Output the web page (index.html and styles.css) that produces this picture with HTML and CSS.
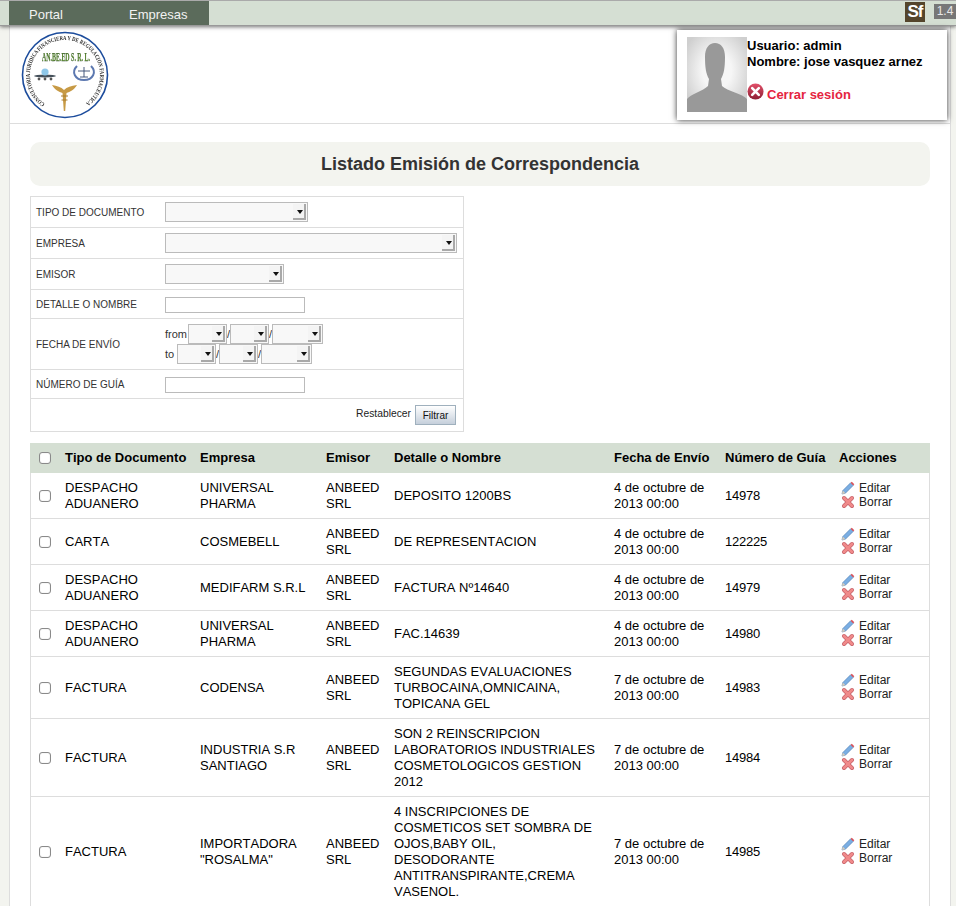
FILE: index.html
```html
<!DOCTYPE html>
<html lang="es">
<head>
    <meta charset="UTF-8">
    <meta name="viewport" content="width=device-width, initial-scale=1.0">
    <title>Listado Emisión de Correspondencia</title>
    <link rel="stylesheet" href="styles.css">
</head>
<body>

    <!-- Top menu -->
    <div class="topbar">
        <nav class="menu">
            <a class="menu-item">Portal</a>
            <a class="menu-item">Empresas</a>
        </nav>
        <div class="debug">
            <span class="sf-badge">Sf</span>
            <span class="sf-version">1.4</span>
        </div>
    </div>

    <div class="page">

        <!-- Logo and user box -->
        <header class="page-header">
            <svg class="logo" width="90" height="90" viewBox="0 0 90 90">
                <defs>
                    <path id="ring-text" d="M 25 73.7 A 35 35 0 1 1 65 73.7"></path>
                </defs>
                <circle cx="45" cy="45" r="42.5" fill="#fff" stroke="#1c4c9c" stroke-width="1.6"></circle>
                <text class="logo-ring"><textPath href="#ring-text" textLength="176" lengthAdjust="spacingAndGlyphs">CONSULTORIA JURIDICA FINANCIERA Y DE REGULACION FARMACEUTICA</textPath></text>
                <text class="logo-name" x="22" y="31" textLength="48" lengthAdjust="spacingAndGlyphs">AN.BE.ED S. R. L.</text>
                <!-- left emblem -->
                <ellipse cx="25" cy="46" rx="11" ry="1.4" fill="#45505a"></ellipse>
                <circle cx="25" cy="42" r="3.6" fill="#8fc7e8"></circle>
                <circle cx="19" cy="49" r="1.4" fill="#555"></circle>
                <circle cx="25" cy="49" r="1.4" fill="#555"></circle>
                <circle cx="31" cy="49" r="1.4" fill="#555"></circle>
                <!-- right emblem -->
                <path d="M 57 36 C 51 42 55 50 64 50 C 73 50 77 42 71 36" fill="none" stroke="#5c78b0" stroke-width="2"></path>
                <path d="M 58 41 H 70 M 64 37 V 47 M 60 47 H 68" fill="none" stroke="#33476f" stroke-width="0.9"></path>
                <!-- caduceus -->
                <path d="M 32 55 C 37 56 41 57 44 60 C 47 57 51 56 57 55 C 54 60 50 62 46.5 63 L 45.2 81 H 43.8 L 42.5 63 C 39 62 35 60 32 55 Z" fill="#c79a45"></path>
                <path d="M 41 66 H 48 M 41.5 70 H 47.5" stroke="#a87d30" stroke-width="1"></path>
            </svg>

            <div class="user-box">
                <svg class="avatar" width="60" height="75" viewBox="0 0 60 75">
                    <defs>
                        <radialGradient id="avatar-bg" cx="50%" cy="45%" r="60%">
                            <stop offset="0.4" stop-color="#f6f6f6"></stop>
                            <stop offset="1" stop-color="#cfcfcf"></stop>
                        </radialGradient>
                    </defs>
                    <rect width="60" height="75" fill="url(#avatar-bg)"></rect>
                    <path d="M0 75 V62 C4 57 16 54 21 49 L22 42 C19 37 18 30 18 20 C18 11 22 6 28 6 C34 6 38 11 38 20 C38 30 37 37 34 42 L35 49 C40 54 56 57 60 62 V75 Z" fill="#999"></path>
                </svg>
                <div class="user-info">
                    <div>Usuario: admin</div>
                    <div>Nombre: jose vasquez arnez</div>
                    <a class="logout">
                        <svg class="logout-icon" width="17" height="17" viewBox="0 0 17 17">
                            <defs>
                                <linearGradient id="logout-bg" x1="0" y1="0" x2="0" y2="1">
                                    <stop offset="0" stop-color="#e2506a"></stop>
                                    <stop offset="1" stop-color="#8e1f33"></stop>
                                </linearGradient>
                            </defs>
                            <circle cx="8.5" cy="8.5" r="8" fill="url(#logout-bg)"></circle>
                            <path d="M5.2 5.2 L11.8 11.8 M11.8 5.2 L5.2 11.8" stroke="#fff" stroke-width="2.6" stroke-linecap="round"></path>
                        </svg>
                        Cerrar sesión
                    </a>
                </div>
            </div>
        </header>

        <main class="content">
            <h1 class="title">Listado Emisión de Correspondencia</h1>

            <!-- Filters -->
            <table class="filters">
                <colgroup>
                    <col class="filter-label-col">
                    <col>
                </colgroup>
                <tr>
                    <td class="filter-label">Tipo de documento</td>
                    <td class="filter-field"><span class="sel sel-doc"><select></select></span></td>
                </tr>
                <tr>
                    <td class="filter-label">Empresa</td>
                    <td class="filter-field"><span class="sel sel-emp"><select></select></span></td>
                </tr>
                <tr>
                    <td class="filter-label">Emisor</td>
                    <td class="filter-field"><span class="sel sel-emi"><select></select></span></td>
                </tr>
                <tr>
                    <td class="filter-label">Detalle o nombre</td>
                    <td class="filter-field filter-text"><input type="text"></td>
                </tr>
                <tr>
                    <td class="filter-label">Fecha de envío</td>
                    <td class="filter-field">
                        <div class="date-row">
                            <span class="date-word date-from">from</span>
                            <span class="sel sel-d"><select></select></span>/<span class="sel sel-d"><select></select></span>/<span class="sel sel-y"><select></select></span>
                        </div>
                        <div class="date-row">
                            <span class="date-word date-to">to</span>
                            <span class="sel sel-d"><select></select></span>/<span class="sel sel-d"><select></select></span>/<span class="sel sel-y"><select></select></span>
                        </div>
                    </td>
                </tr>
                <tr>
                    <td class="filter-label">Número de guía</td>
                    <td class="filter-field filter-text"><input type="text"></td>
                </tr>
                <tr>
                    <td class="filter-actions" colspan="2">
                        <div class="filter-buttons">
                            <a class="reset">Restablecer</a>
                            <button class="filter-btn">Filtrar</button>
                        </div>
                    </td>
                </tr>
            </table>

            <!-- List -->
            <table class="list">
                <colgroup>
                    <col class="c-check"><col class="c-tipo"><col class="c-empresa"><col class="c-emisor">
                    <col class="c-detalle"><col class="c-fecha"><col class="c-guia"><col class="c-acciones">
                </colgroup>
                <thead>
                    <tr>
                        <th><input type="checkbox"></th>
                        <th>Tipo de Documento</th>
                        <th>Empresa</th>
                        <th>Emisor</th>
                        <th>Detalle o Nombre</th>
                        <th>Fecha de Envío</th>
                        <th>Número de Guía</th>
                        <th>Acciones</th>
                    </tr>
                </thead>
                <tbody>
                    <tr>
                        <td><input type="checkbox"></td>
                        <td>DESPACHO ADUANERO</td>
                        <td>UNIVERSAL PHARMA</td>
                        <td>ANBEED SRL</td>
                        <td>DEPOSITO 1200BS</td>
                        <td>4 de octubre de 2013 00:00</td>
                        <td class="guia">14978</td>
                        <td>
                            <a class="action"><svg class="action-icon" viewBox="0 0 14 14"><use href="#icon-edit"></use></svg>Editar</a>
                            <a class="action"><svg class="action-icon" viewBox="0 0 14 14"><use href="#icon-delete"></use></svg>Borrar</a>
                        </td>
                    </tr>
                    <tr>
                        <td><input type="checkbox"></td>
                        <td>CARTA</td>
                        <td>COSMEBELL</td>
                        <td>ANBEED SRL</td>
                        <td>DE REPRESENTACION</td>
                        <td>4 de octubre de 2013 00:00</td>
                        <td class="guia">122225</td>
                        <td>
                            <a class="action"><svg class="action-icon" viewBox="0 0 14 14"><use href="#icon-edit"></use></svg>Editar</a>
                            <a class="action"><svg class="action-icon" viewBox="0 0 14 14"><use href="#icon-delete"></use></svg>Borrar</a>
                        </td>
                    </tr>
                    <tr>
                        <td><input type="checkbox"></td>
                        <td>DESPACHO ADUANERO</td>
                        <td>MEDIFARM S.R.L</td>
                        <td>ANBEED SRL</td>
                        <td>FACTURA Nº14640</td>
                        <td>4 de octubre de 2013 00:00</td>
                        <td class="guia">14979</td>
                        <td>
                            <a class="action"><svg class="action-icon" viewBox="0 0 14 14"><use href="#icon-edit"></use></svg>Editar</a>
                            <a class="action"><svg class="action-icon" viewBox="0 0 14 14"><use href="#icon-delete"></use></svg>Borrar</a>
                        </td>
                    </tr>
                    <tr>
                        <td><input type="checkbox"></td>
                        <td>DESPACHO ADUANERO</td>
                        <td>UNIVERSAL PHARMA</td>
                        <td>ANBEED SRL</td>
                        <td>FAC.14639</td>
                        <td>4 de octubre de 2013 00:00</td>
                        <td class="guia">14980</td>
                        <td>
                            <a class="action"><svg class="action-icon" viewBox="0 0 14 14"><use href="#icon-edit"></use></svg>Editar</a>
                            <a class="action"><svg class="action-icon" viewBox="0 0 14 14"><use href="#icon-delete"></use></svg>Borrar</a>
                        </td>
                    </tr>
                    <tr>
                        <td><input type="checkbox"></td>
                        <td>FACTURA</td>
                        <td>CODENSA</td>
                        <td>ANBEED SRL</td>
                        <td>SEGUNDAS EVALUACIONES TURBOCAINA,OMNICAINA, TOPICANA GEL</td>
                        <td>7 de octubre de 2013 00:00</td>
                        <td class="guia">14983</td>
                        <td>
                            <a class="action"><svg class="action-icon" viewBox="0 0 14 14"><use href="#icon-edit"></use></svg>Editar</a>
                            <a class="action"><svg class="action-icon" viewBox="0 0 14 14"><use href="#icon-delete"></use></svg>Borrar</a>
                        </td>
                    </tr>
                    <tr>
                        <td><input type="checkbox"></td>
                        <td>FACTURA</td>
                        <td>INDUSTRIA S.R SANTIAGO</td>
                        <td>ANBEED SRL</td>
                        <td>SON 2 REINSCRIPCION LABORATORIOS INDUSTRIALES COSMETOLOGICOS GESTION 2012</td>
                        <td>7 de octubre de 2013 00:00</td>
                        <td class="guia">14984</td>
                        <td>
                            <a class="action"><svg class="action-icon" viewBox="0 0 14 14"><use href="#icon-edit"></use></svg>Editar</a>
                            <a class="action"><svg class="action-icon" viewBox="0 0 14 14"><use href="#icon-delete"></use></svg>Borrar</a>
                        </td>
                    </tr>
                    <tr>
                        <td><input type="checkbox"></td>
                        <td>FACTURA</td>
                        <td>IMPORTADORA "ROSALMA"</td>
                        <td>ANBEED SRL</td>
                        <td>4 INSCRIPCIONES DE COSMETICOS SET SOMBRA DE OJOS,BABY OIL, DESODORANTE ANTITRANSPIRANTE,CREMA VASENOL.</td>
                        <td>7 de octubre de 2013 00:00</td>
                        <td class="guia">14985</td>
                        <td>
                            <a class="action"><svg class="action-icon" viewBox="0 0 14 14"><use href="#icon-edit"></use></svg>Editar</a>
                            <a class="action"><svg class="action-icon" viewBox="0 0 14 14"><use href="#icon-delete"></use></svg>Borrar</a>
                        </td>
                    </tr>
                </tbody>
            </table>
        </main>
    </div>

    <!-- Shared action icons -->
    <svg class="icon-defs" width="0" height="0">
        <defs>
            <g id="icon-edit">
                <path d="M1 13 L1.8 9.6 L9.6 1.8 L12.2 4.4 L4.4 12.2 Z" fill="#7aaee3" stroke="#5a86b8" stroke-width="0.7"></path>
                <path d="M1 13 L1.8 9.6 L4.4 12.2 Z" fill="#d9cdbb"></path>
                <path d="M9.6 1.8 L10.8 0.7 L13.3 3.2 L12.2 4.4 Z" fill="#d8505a"></path>
            </g>
            <g id="icon-delete">
                <path d="M3 3 L11 11 M11 3 L3 11" stroke="#c46068" stroke-width="4" stroke-linecap="round"></path>
                <path d="M3 3 L11 11 M11 3 L3 11" stroke="#f08a8a" stroke-width="2.6" stroke-linecap="round"></path>
            </g>
        </defs>
    </svg>

</body>
</html>
```
FILE: styles.css
```css
html, body {
    height: 906px;
    overflow: hidden;
}
body {
    font-family: "Liberation Sans", Arial, sans-serif;
    font-size: 13px;
    color: #000;
    background-color: #f3f4ef;
    margin: 0;
    padding: 0;
}

/* top bar */
.topbar {
    display: flex;
    justify-content: space-between;
    height: 24px;
    padding-left: 9px;
    background-color: #d5dfd3;
    border-top: 1px solid #aaa;
    border-bottom: 1px solid #999;
    box-shadow: 0 1px 4px rgba(0, 0, 0, 0.55);
    position: relative;
}
.menu {
    display: flex;
    background-color: #5b6b5b;
}
.menu-item {
    width: 80px;
    padding-left: 20px;
    line-height: 28px;
    color: #f2f2f2;
}
.debug {
    display: flex;
    align-items: flex-start;
}
.sf-badge {
    width: 20px;
    height: 20px;
    margin-top: 1px;
    margin-right: 9px;
    background-color: #54452c;
    color: #fff;
    font-size: 17px;
    font-weight: bold;
    line-height: 20px;
    text-align: center;
    letter-spacing: -1px;
}
.sf-version {
    width: 22px;
    height: 15px;
    margin-top: 3px;
    background-color: #777;
    color: #e8e8e8;
    font-size: 12px;
    line-height: 15px;
    text-align: center;
}

/* page frame */
.page {
    margin-left: 9px;
    width: 940px;
    background: white;
    border-left: 1px solid #ddd;
    border-right: 1px solid #ddd;
    height: 880px;
}
.page-header {
    display: flex;
    justify-content: space-between;
    align-items: flex-start;
    height: 97px;
    border-bottom: 1px solid #ddd;
}
.logo {
    margin-left: 10px;
    margin-top: 4px;
    filter: blur(0.35px);
}
.logo-ring {
    font-family: "Liberation Serif", serif;
    font-size: 6px;
    font-weight: bold;
    fill: #2a2a2a;
}
.logo-name {
    font-family: "Liberation Serif", serif;
    font-size: 13px;
    font-weight: bold;
    fill: #5a8a2a;
    stroke: #2f4a33;
    stroke-width: 0.25;
}
.user-box {
    display: flex;
    width: 250px;
    height: 75px;
    margin-top: 4px;
    margin-right: 3px;
    padding: 7px 10px 8px;
    background: white;
    box-shadow: 0 0 6px rgba(0, 0, 0, 0.8);
    position: relative;
}
.user-info {
    padding-top: 1px;
    font-weight: bold;
    font-size: 13px;
    line-height: 16px;
    color: #000;
}
.logout {
    display: flex;
    align-items: flex-start;
    gap: 3px;
    margin-top: 17px;
    color: #e5243f;
}
.logout-icon {
    margin-top: -4px;
}

/* content */
.content {
    padding: 18px 20px 0;
}
.title {
    margin: 0 0 10px;
    height: 44px;
    background-color: #f3f4ef;
    border-radius: 10px;
    font-size: 18px;
    line-height: 44px;
    text-align: center;
    color: #333;
}

/* filter form */
.filters {
    width: 434px;
    table-layout: fixed;
    border-collapse: separate;
    border-spacing: 0;
    border: 1px solid #ddd;
    margin-bottom: 11px;
    font-size: 10px;
    color: #333;
}
.filter-label-col {
    width: 134px;
}
.filters tr + tr td {
    border-top: 1px solid #ddd;
}
.filters td {
    padding: 5px 0;
}
.filter-label {
    text-transform: uppercase;
    padding-left: 5px !important;
}
.filter-field {
    line-height: 0;
}
.filters .filter-text {
    padding: 7px 0 5px;
}
.filter-text input {
    display: block;
    box-sizing: border-box;
    width: 140px;
    height: 16px;
    margin: 0;
    padding: 0 2px;
    border: 1px solid #bbb;
    background: white;
}
.sel {
    display: inline-block;
    position: relative;
    box-sizing: border-box;
    height: 20px;
    border: 1px solid #bbb;
    background-color: #f8f8f8;
    vertical-align: top;
}
.sel select {
    display: block;
    width: 100%;
    height: 100%;
    margin: 0;
    border: none;
    background: transparent;
    appearance: none;
}
.sel::after {
    content: "";
    position: absolute;
    top: 1px;
    right: 1px;
    width: 13px;
    height: 16px;
    background-color: #f4f4f4;
    box-shadow: inset -2px -2px 0 #a9a9a9;
}
.sel::before {
    content: "";
    position: absolute;
    top: 7px;
    right: 4px;
    border-top: 4px solid #111;
    border-left: 3.5px solid transparent;
    border-right: 3.5px solid transparent;
    z-index: 1;
}
.sel-doc { width: 143px; }
.sel-emp { width: 292px; }
.sel-emi { width: 119px; }
.sel-d { width: 39px; }
.sel-y { width: 51px; }
.date-row {
    display: flex;
    align-items: center;
    line-height: 20px;
    height: 20px;
    font-size: 11px;
    white-space: nowrap;
}
.date-from { width: 23px; }
.date-to { width: 12px; }
.filters .filter-actions {
    padding: 6px 7px 6px 0;
}
.filter-buttons {
    display: flex;
    justify-content: flex-end;
    align-items: flex-start;
    gap: 4px;
}
.reset {
    font-size: 10.3px;
    line-height: 18px;
    color: #222;
}
.filter-btn {
    box-sizing: border-box;
    width: 41px;
    height: 20px;
    padding: 0;
    border: 1px solid #9fb0bd;
    background: linear-gradient(#fff, #c5cfdb);
    font-family: inherit;
    font-size: 10px;
    color: #111;
}

/* list */
.list {
    width: 900px;
    table-layout: fixed;
    border-collapse: separate;
    border-spacing: 0;
    line-height: 16px;
    font-kerning: none;
}
.c-check { width: 27px; }
.c-tipo { width: 135px; }
.c-empresa { width: 126px; }
.c-emisor { width: 68px; }
.c-detalle { width: 220px; }
.c-fecha { width: 111px; }
.c-guia { width: 114px; }
.c-acciones { width: 99px; }
.list th {
    padding: 7px 8px;
    background-color: #d5dfd3;
    font-weight: bold;
    text-align: left;
    white-space: nowrap;
}
.list td {
    padding: 7px 8px 6px;
    border-bottom: 1px solid #ddd;
}
.list td:first-child {
    border-left: 1px solid #ddd;
    padding-left: 8px;
}
.list td:last-child {
    border-right: 1px solid #ddd;
}
.list th:first-child {
    padding-left: 9px;
}
.list input[type="checkbox"] {
    display: block;
    box-sizing: border-box;
    width: 12px;
    height: 12px;
    margin: 0;
    appearance: none;
    background: white;
    border: 1px solid #8a8a8a;
    border-radius: 3px;
    box-shadow: inset 0 0 1px #bbb;
}
.guia {
    letter-spacing: -0.25px;
}
.action {
    display: flex;
    align-items: center;
    height: 14px;
    font-size: 12px;
    color: #222;
}
.action:first-child {
    margin-top: -1px;
}
.action:last-child {
    margin-bottom: 1px;
}
.action-icon {
    width: 14px;
    height: 14px;
    margin-left: 2px;
    margin-right: 4px;
}
.icon-defs {
    display: block;
}
```
